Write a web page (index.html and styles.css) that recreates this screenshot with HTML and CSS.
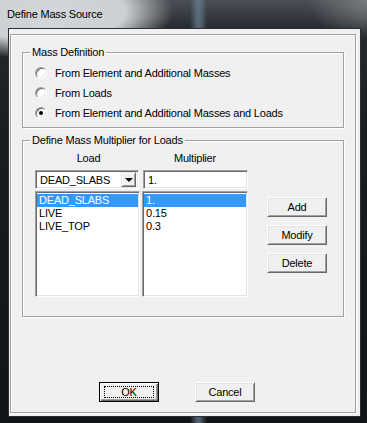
FILE: index.html
```html
<!DOCTYPE html>
<html lang="en">
<head>
  <meta charset="UTF-8">
  <meta name="viewport" content="width=device-width, initial-scale=1.0">
  <title>Define Mass Source</title>
  <link rel="stylesheet" href="styles.css">
</head>
<body>
  <div class="window">
    <div class="titlebar">Define Mass Source</div>

    <div class="client">
      <div class="panel">

        <fieldset class="group group-def">
          <legend>Mass Definition</legend>
          <div class="radio-list">
            <div class="radio-row"><span class="radio"></span>From Element and Additional Masses</div>
            <div class="radio-row"><span class="radio"></span>From Loads</div>
            <div class="radio-row"><span class="radio checked"></span>From Element and Additional Masses and Loads</div>
          </div>
        </fieldset>

        <fieldset class="group group-loads">
          <legend>Define Mass Multiplier for Loads</legend>
          <div class="loads">
            <div class="col col-load">
              <div class="col-head">Load</div>
              <div class="combo">
                <span class="combo-text">DEAD_SLABS</span>
                <span class="drop-btn"><span class="arrow"></span></span>
              </div>
              <ul class="listbox list-load">
                <li class="selected">DEAD_SLABS</li>
                <li>LIVE</li>
                <li>LIVE_TOP</li>
              </ul>
            </div>

            <div class="col col-mult">
              <div class="col-head">Multiplier</div>
              <div class="textbox">1.</div>
              <ul class="listbox list-mult">
                <li class="selected">1.</li>
                <li>0.15</li>
                <li>0.3</li>
              </ul>
            </div>

            <div class="side-buttons">
              <div class="btn">Add</div>
              <div class="btn">Modify</div>
              <div class="btn">Delete</div>
            </div>
          </div>
        </fieldset>

        <div class="footer">
          <div class="btn btn-default"><span class="focus-rect">OK</span></div>
          <div class="btn">Cancel</div>
        </div>

      </div>
    </div>
  </div>
</body>
</html>
```

FILE: styles.css
```css
body {
  margin: 0;
  background: #000;
  font-family: "Liberation Sans", Arial, sans-serif;
  font-size: 11px;
  letter-spacing: -0.2px;
  color: #000;
}

/* window frame (aero glass look) */
.window {
  width: 367px;
  height: 423px;
  display: flex;
  flex-direction: column;
  background:
    radial-gradient(ellipse 125px 48px at 48px 12px, #d4d7d9 0, #cdd0d3 62%, rgba(40, 46, 52, 0) 100%),
    linear-gradient(to right, rgba(0, 0, 0, 0) 190px, rgba(105, 125, 145, 0.7) 197px, rgba(105, 125, 145, 0.7) 200px, rgba(0, 0, 0, 0) 207px),
    radial-gradient(ellipse 60px 40px at 367px 0, #777c80 0, rgba(60, 65, 70, 0) 100%),
    linear-gradient(to bottom, #4a5055 0, #22282c 30px, #181d21 140px, #111417 100%);
}

.titlebar {
  height: 28px;
  box-sizing: border-box;
  padding: 7px 0 0 7px;
  line-height: 14px;
  font-size: 11px;
}

.client {
  flex: 1;
  display: flex;
  margin: 0 6px 6px 8px;
  padding: 5px 4px 3px 1px;
  border: 1px solid #2b2f33;
  background: #f0f0f0;
}

.panel {
  flex: 1;
  display: flex;
  flex-direction: column;
  padding: 0 11px;
  border: 1px solid #a0a0a0;
  box-shadow: inset 1px 1px 0 #fff, 1px 1px 0 #fff;
}

/* group boxes */
.group {
  margin: 0;
  padding: 0;
  min-inline-size: 0;
  border: 1px solid #a0a0a0;
  box-shadow: inset 1px 1px 0 #fff, 1px 1px 0 #fff;
}

.group legend {
  margin-left: 7px;
  padding: 0 2px;
  line-height: 13px;
  background: #f0f0f0;
}

.group-def {
  margin-top: 11px;
}

.group-loads {
  margin-top: 6px;
}

.radio-list {
  padding: 4px 0 4px 12px;
}

.radio-row {
  display: flex;
  align-items: center;
  gap: 8px;
  height: 20px;
}

.radio {
  width: 12px;
  height: 12px;
  box-sizing: border-box;
  border-radius: 50%;
  border: 1px solid;
  border-color: #a0a0a0 #fff #fff #a0a0a0;
  background: #fff;
  box-shadow: inset 1px 1px 0 #696969, inset -1px -1px 0 #e3e3e3;
  display: flex;
  align-items: center;
  justify-content: center;
}

.radio.checked::after {
  content: "";
  width: 4px;
  height: 4px;
  border-radius: 50%;
  background: #000;
}

/* load multipliers */
.loads {
  display: flex;
  padding: 5px 0 19px 12px;
}

.col-load {
  width: 107px;
}

.col-mult {
  width: 106px;
}

.col-head {
  height: 13px;
  line-height: 13px;
  margin-bottom: 5px;
  text-align: center;
}

.combo,
.textbox,
.listbox {
  box-sizing: border-box;
  border: 1px solid;
  border-color: #a0a0a0 #fff #fff #a0a0a0;
  box-shadow: inset 1px 1px 0 #696969, inset -1px -1px 0 #e3e3e3;
  background: #fff;
}

.combo,
.textbox {
  height: 19px;
  display: flex;
  align-items: center;
  padding-left: 4px;
}

.combo {
  width: 104px;
  justify-content: space-between;
  padding-right: 2px;
}

.textbox {
  width: 105px;
  margin-left: 1px;
}

.drop-btn {
  width: 15px;
  height: 15px;
  box-sizing: border-box;
  border: 1px solid;
  border-color: #e3e3e3 #696969 #696969 #e3e3e3;
  box-shadow: inset 1px 1px 0 #fff, inset -1px -1px 0 #a0a0a0;
  background: #f0f0f0;
  display: flex;
  align-items: center;
  justify-content: center;
}

.arrow {
  width: 0;
  height: 0;
  border-left: 4px solid transparent;
  border-right: 4px solid transparent;
  border-top: 4px solid #000;
  margin-top: 1px;
}

.listbox {
  list-style: none;
  margin: 2px 0 0;
  padding: 2px 1px;
  height: 106px;
}

.list-load {
  width: 105px;
}

.list-mult {
  width: 106px;
}

.listbox li {
  height: 13px;
  line-height: 13px;
  padding-left: 2px;
}

.listbox li.selected {
  background: #3399ff;
  color: #fff;
}

.side-buttons {
  display: flex;
  flex-direction: column;
  gap: 8px;
  margin-left: 19px;
  padding-top: 45px;
}

/* classic 3d buttons */
.btn {
  width: 60px;
  height: 20px;
  box-sizing: border-box;
  border: 1px solid;
  border-color: #fff #696969 #696969 #fff;
  box-shadow: inset 1px 1px 0 #e3e3e3, inset -1px -1px 0 #a0a0a0;
  background: #f0f0f0;
  display: flex;
  align-items: center;
  justify-content: center;
}

.btn-default {
  border: 1px solid #000;
  box-shadow: inset 1px 1px 0 #fff, inset -1px -1px 0 #696969, inset -2px -2px 0 #a0a0a0;
  padding: 3px 4px;
}

.focus-rect {
  flex: 1;
  align-self: stretch;
  display: flex;
  align-items: center;
  justify-content: center;
  border: 1px dotted #000;
}

.footer {
  display: flex;
  gap: 36px;
  margin-top: 65px;
  padding-left: 77px;
}
```
